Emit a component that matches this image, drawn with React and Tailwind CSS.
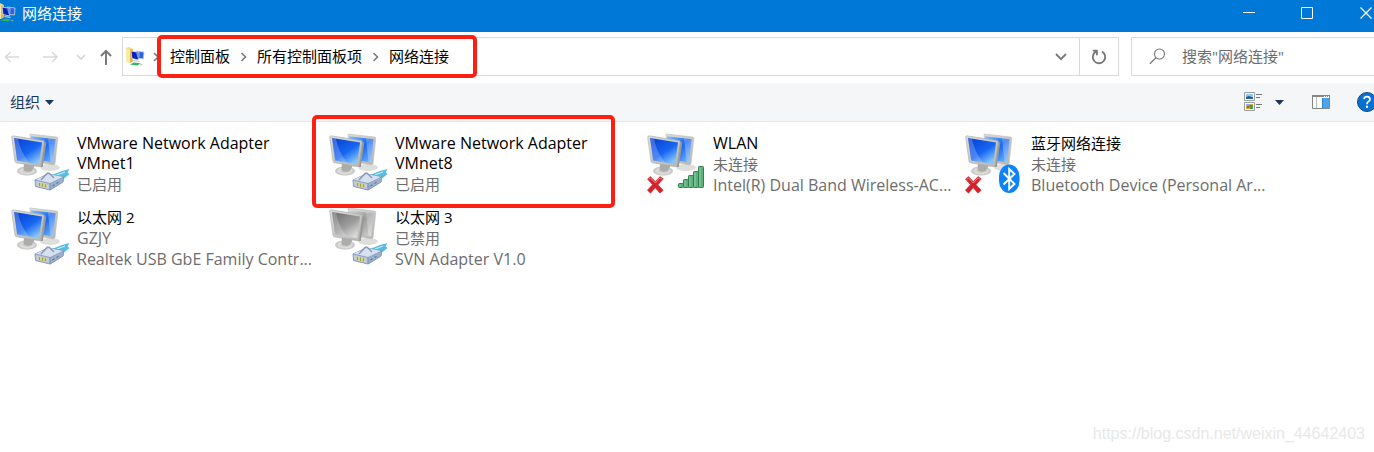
import React from "react";

function Monitors({ disabled }) {
  const k = disabled ? "g" : "b";
  const dark = disabled ? "#6c6c6c" : "#063cd0";
  const mid = disabled ? "#9c9c9c" : "#1766f2";
  const light = disabled ? "#dadada" : "#86c6fc";
  return (
    <g>
      <defs>
        <linearGradient id={"scr" + k} x1="0" y1="0" x2="0.7" y2="1">
          <stop offset="0" stopColor={dark} />
          <stop offset="0.6" stopColor={mid} />
          <stop offset="1" stopColor={light} />
        </linearGradient>
        <linearGradient id={"back" + k} x1="0" y1="0" x2="1" y2="1">
          <stop offset="0" stopColor={light} />
          <stop offset="0.5" stopColor={mid} />
          <stop offset="1" stopColor={light} />
        </linearGradient>
        <linearGradient id={"rim" + k} x1="0" y1="0" x2="1" y2="1">
          <stop offset="0" stopColor="#dcdcda" />
          <stop offset="1" stopColor="#b5b5b2" />
        </linearGradient>
        <radialGradient id={"foot" + k}>
          <stop offset="0" stopColor="#bdbdbd" />
          <stop offset="0.6" stopColor="#dededc" />
          <stop offset="1" stopColor="#c0c0be" />
        </radialGradient>
      </defs>
      <ellipse cx="40" cy="34.500" rx="10" ry="3.500" fill="#dededc" />
      <path d="M20 1 46.500 4Q48 4.200 47.800 5.500L45 30.500Q44.800 32 43 31.800L22 28Z" fill={`url(#rim${k})`} stroke="#bcbcb9" strokeWidth=".6" />
      <path d="M21 3.200 45.500 6.200 43 29.500 22.500 26Z" fill={`url(#back${k})`} />
      <path d="M38 5.300 45.500 6.200 43 29.500 40.500 28.900Z" fill="#fff" opacity=".25" />
      <ellipse cx="17" cy="38" rx="10" ry="4.500" fill={`url(#foot${k})`} />
      <path d="M14 30 25 32 22 38Q17 40 13.500 37Z" fill="#acacaa" />
      <path d="M34.500 8.500 36.300 10 32.800 34 30.500 34Z" fill="#979794" />
      <path d="M3 2.800 33 7.500Q34.500 7.800 34.300 9L31.200 32.500Q31 34 29.500 33.700L6.500 29.800Q5.300 29.600 5 28.300L1.700 4.500Q1.600 2.800 3 2.800Z" fill={`url(#rim${k})`} stroke="#a9a9a6" strokeWidth=".6" />
      <path d="M4 5 32 9.500 29.200 31.300 7.200 27.600Z" fill={`url(#scr${k})`} />
      <path d="M4 5 8 5.700Q10 18 19 29.600L7.200 27.600Z" fill="#fff" opacity=".22" />
    </g>
  );
}

function Cable() {
  return (
    <g strokeLinejoin="round">
      <path d="M42 42 52 38 59.500 36 57.500 39.500 59.500 41 53.500 46 45 46Z" fill="#55bde0" />
      <path d="M47 42 55 39" stroke="#c4ecf7" strokeWidth="1.200" />
      <path d="M25 47 38 41 53.500 44 53 49 40 57 25.500 53.500Z" fill="#bccae0" stroke="#7f93b5" strokeWidth=".9" />
      <path d="M25 47 38 41 53.500 44 40 50.500Z" fill="#d6e0ee" />
      <path d="M40 50.500 53.500 44 53 49 40 57Z" fill="#9db0d0" stroke="#7f93b5" strokeWidth=".6" />
      <path d="M25 47 40 50.500V57" fill="none" stroke="#7f93b5" strokeWidth=".8" />
      <path d="M31 47 37 40.500Q38 39.500 39.500 40.500L44 45" fill="none" stroke="#8496b4" strokeWidth="1.400" />
      <path d="M27 49 38 51.500V55.300L27 52.700Z" fill="#d5d29c" />
      <path d="M29.500 50V53M32.500 50.500V53.700M35.500 51.300V54.300" stroke="#a39c43" strokeWidth="1.100" />
      <path d="M42.500 53 44.500 51.800M46.500 50.500 48.500 49.300" stroke="#61759b" strokeWidth="1.200" />
    </g>
  );
}

function Cross() {
  return (
    <g>
      <path d="M1.500 46 4.500 43.600 9.300 48.600 14 43.600 17.300 45.800 12 51.800 17.200 57.300 14 60.200 9.200 54.800 4.500 60.200 1.400 57.200 6.500 51.700Z" fill="#d8202a" stroke="#c22b33" strokeWidth=".6" strokeLinejoin="round" />
      <path d="M3 46 4.600 45 9.300 50 14 45 16 46" fill="none" stroke="#f08080" strokeWidth="1" />
    </g>
  );
}

function Signal() {
  const bars = [[32, 4], [37, 8], [42, 12], [47, 16], [52, 21]];
  return (
    <g>
      {bars.map(([x, h]) => (
        <g key={x}>
          <rect x={x + 0.5} y={54.5 - h} width="5" height={h} rx=".8" fill="#5bb07c" stroke="#32804f" />
          <path d={`M${x + 2} ${55.5 - h}v${h - 2}`} stroke="#94cba7" />
        </g>
      ))}
    </g>
  );
}

function Bluetooth() {
  return (
    <g>
      <rect x="35" y="31.500" width="20.500" height="28.500" rx="10.200" ry="12" fill="#0a84f8" />
      <path d="M39.500 40 50.500 51 45.200 56V36L50.500 41 39.500 51.500" fill="none" stroke="#fff" strokeWidth="1.900" />
    </g>
  );
}

function AdapterIcon({ kind }) {
  return (
    <svg viewBox="0 0 62 62" className="h-[62px] w-[62px] shrink-0" aria-hidden="true">
      <Monitors disabled={kind === "disabled"} />
      {(kind === "wired" || kind === "disabled") && <Cable />}
      {(kind === "wifi" || kind === "bluetooth") && <Cross />}
      {kind === "wifi" && <Signal />}
      {kind === "bluetooth" && <Bluetooth />}
    </svg>
  );
}

function FolderIcon({ className }) {
  return (
    <svg viewBox="0 0 20 20" className={className} aria-hidden="true">
      <path d="M1 1 4 0 8 2V14L5 16 1 14Z" fill="#f4d979" />
      <path d="M1 1 5 3V16L1 14Z" fill="#fbeaa9" />
      <path d="M5 3 8 2V14L5 16Z" fill="#dfb64a" />
      <path d="M11 4 19 5 18.500 12 11 11Z" fill="#2f62dc" stroke="#cfd5df" strokeWidth=".8" />
      <path d="M6 4 14 5.500 13.500 13 7 11.500Z" fill="#0a1fb4" stroke="#dfe3ea" strokeWidth=".8" />
      <path d="M11 5.500 14 6 13.500 12 12.500 11Z" fill="#5a9af5" />
      <path d="M9 13 15 14 14 15 8 14Z" fill="#c5c9cf" />
      <path d="M5 17.500 9 15.500 16 16.500 12 18.500Z" fill="#2cb45c" />
      <path d="M15 17 18 17.500 16 18.500Z" fill="#a9aeb8" />
    </svg>
  );
}

function Caret() {
  return (
    <svg viewBox="0 0 9 5" className="h-[5px] w-[9px]" aria-hidden="true">
      <path d="M0 0H9L4.500 5Z" fill="#1b365f" />
    </svg>
  );
}

function Crumb() {
  return (
    <svg viewBox="0 0 27 12" className="h-3 w-[27px] shrink-0" aria-hidden="true">
      <path d="M11.500 2 15.500 6 11.500 10" fill="none" stroke="#7b7b7b" strokeWidth="1.600" />
    </svg>
  );
}

const adapters = [
  { name: "VMware Network Adapter VMnet1", status: "已启用", kind: "wired" },
  { name: "VMware Network Adapter VMnet8", status: "已启用", kind: "wired", marked: true },
  { name: "WLAN", status: "未连接", device: "Intel(R) Dual Band Wireless-AC...", kind: "wifi" },
  { name: "蓝牙网络连接", status: "未连接", device: "Bluetooth Device (Personal Ar...", kind: "bluetooth" },
  { name: "以太网 2", status: "GZJY", device: "Realtek USB GbE Family Contr...", kind: "wired" },
  { name: "以太网 3", status: "已禁用", device: "SVN Adapter V1.0", kind: "disabled" },
];

const isLatin = (text) => /^[\x20-\x7e]*$/.test(text);

function Line({ text, className }) {
  return <p className={`${isLatin(text) ? "text-[16px]" : "text-[15px]"} ${className}`}>{text}</p>;
}

function Adapter({ item }) {
  return (
    <li className="relative flex h-[74px] gap-[5px] pl-[10px]">
      <AdapterIcon kind={item.kind} />
      <div className="w-[236px] whitespace-nowrap text-[#6d6d6d]">
        <Line text={item.name} className="mb-[1px] w-[210px] whitespace-normal leading-[20px] text-black" />
        <Line text={item.status} className="leading-[21px]" />
        {item.device && <Line text={item.device} className="leading-[21px]" />}
      </div>
      {item.marked && (
        <span className="pointer-events-none absolute -left-[6px] -top-[18px] z-10 h-[93px] w-[303px] rounded-[5px] border-4 border-[#fc2013]" />
      )}
    </li>
  );
}

export default function App() {
  return (
    <div className="flex min-h-screen flex-col overflow-hidden bg-white font-['Open_Sans','Noto_Sans_CJK_SC',sans-serif] text-[15px] text-black">
      <header className="flex h-8 items-center bg-[#0078d7] text-white">
        <FolderIcon className="-ml-[4px] mb-[6px] h-5 w-5" />
        <h1 className="ml-[6px] pb-[6px] leading-6">网络连接</h1>
        <div className="-mr-[22px] ml-auto flex h-full pb-[6px]">
          <button aria-label="最小化" className="flex w-[58px] items-center justify-center">
            <svg viewBox="0 0 12 12" className="h-3 w-3"><path d="M0 5.500H12" stroke="#fff" /></svg>
          </button>
          <button aria-label="最大化" className="flex w-[58px] items-center justify-center">
            <svg viewBox="0 0 12 12" className="h-3 w-3"><path d="M.5 .5H11.500V11.500H.5Z" fill="none" stroke="#fff" /></svg>
          </button>
          <button aria-label="关闭" className="flex w-[60px] items-center justify-center">
            <svg viewBox="0 0 12 12" className="h-3 w-3"><path d="M.5 .5 11.500 11.500M11.500 .5 .5 11.500" stroke="#fff" strokeWidth="1.200" /></svg>
          </button>
        </div>
      </header>

      <div className="flex h-[51px] items-center pb-[2px]">
        <div className="flex w-[122px] shrink-0 items-center pl-1">
          <button aria-label="后退" className="w-[39px]">
            <svg viewBox="0 0 16 14" className="h-[14px] w-4"><path d="M15 7H1.500M6.500 2 1.500 7 6.500 12" fill="none" stroke="#dadada" strokeWidth="1.600" /></svg>
          </button>
          <button aria-label="前进" className="w-[33px]">
            <svg viewBox="0 0 16 14" className="h-[14px] w-4"><path d="M0 7H14M9 2 14 7 9 12" fill="none" stroke="#dadada" strokeWidth="1.600" /></svg>
          </button>
          <button aria-label="最近位置" className="w-[24px]">
            <svg viewBox="0 0 10 8" className="h-2 w-[10px]"><path d="M1 2 5 6 9 2" fill="none" stroke="#d2d2d2" strokeWidth="1.500" /></svg>
          </button>
          <button aria-label="上移">
            <svg viewBox="0 0 12 16" className="h-4 w-3"><path d="M6 16V1.500M1 7 6 1.800 11 7" fill="none" stroke="#757575" strokeWidth="1.900" /></svg>
          </button>
        </div>

        <div className="flex h-[39px] flex-1 items-center border border-[#d9d9d9]">
          <FolderIcon className="ml-[2px] h-5 w-5" />
          <svg viewBox="0 0 6 12" className="ml-[8px] h-3 w-[6px]" aria-hidden="true"><path d="M1 2 5 6 1 10" fill="none" stroke="#7b7b7b" strokeWidth="1.600" /></svg>
          <nav aria-label="地址" className="relative ml-[11px] flex h-[39px] items-center">
            <a href="#panel">控制面板</a>
            <Crumb />
            <a href="#all">所有控制面板项</a>
            <Crumb />
            <a href="#network">网络连接</a>
            <span className="pointer-events-none absolute -bottom-[2px] -left-[13px] -right-[28px] -top-[2px] rounded-[5px] border-4 border-[#fc2013]" />
          </nav>
          <button aria-label="以前的位置" className="ml-auto flex h-full w-[37px] items-center justify-center">
            <svg viewBox="0 0 12 8" className="h-2 w-3"><path d="M1 1 6 6.200 11 1" fill="none" stroke="#7a7a7a" strokeWidth="1.900" /></svg>
          </button>
          <button aria-label="刷新" className="flex h-full w-[39px] items-center justify-center border-l border-[#d9d9d9]">
            <svg viewBox="0 0 16 16" className="h-4 w-4"><path d="M11 2.600A6.200 6.200 0 1 1 5 2.600M1.800 1.700H5.900V6.200" fill="none" stroke="#777" strokeWidth="1.800" /></svg>
          </button>
        </div>

        <label className="ml-3 flex h-[39px] w-[243px] items-center gap-[16px] border border-r-0 border-[#d9d9d9] pl-[17px]">
          <svg viewBox="0 0 17 17" className="h-[17px] w-[17px] shrink-0" aria-hidden="true"><circle cx="10.500" cy="6" r="5" fill="none" stroke="#777" strokeWidth="1.100" /><path d="M7 9.800.8 15.800" stroke="#777" strokeWidth="1.200" /></svg>
          <input type="search" aria-label="搜索" placeholder={'搜索"网络连接"'} className="min-w-0 flex-1 outline-none placeholder:text-[#6d6d6d]" />
        </label>
      </div>

      <div className="flex h-[39px] items-center overflow-hidden border-b border-[#e6e7e9] bg-[#f5f6f7] pl-[10px]">
        <button className="flex items-center gap-[5px] text-[#1b365f]">组织 <Caret /></button>
        <div className="-mr-[3px] ml-auto flex items-center">
          <button aria-label="更改视图">
            <svg viewBox="0 0 18 20" className="h-5 w-[18px]">
              <path d="M.5 .5H10.500V8.500H.5ZM.5 10.500H10.500V18.500H.5Z" fill="#fff" stroke="#9b9b9b" />
              <path d="M2 2H9V7H2Z" fill="#8ec6f0" /><path d="M2 5 5 4 9 5.500V7H2Z" fill="#275d8c" />
              <path d="M2 12H9V17H2Z" fill="#c8b04a" /><path d="M2 12H5V14H2Z" fill="#76b9e8" /><path d="M5 13H9V17H6Z" fill="#55983d" /><path d="M3 14H5V16H3Z" fill="#c54c34" />
              <path d="M12 2.500H18M12 5.500H16M12 12.500H18M12 15.500H16" stroke="#777" />
            </svg>
          </button>
          <button aria-label="更多选项" className="ml-[13px] flex h-5 items-center"><Caret /></button>
          <button aria-label="显示预览窗格" className="ml-[28px]">
            <svg viewBox="0 0 18 14" className="h-[14px] w-[18px]">
              <path d="M.5 .5H17.500V13.500H.5Z" fill="#fff" stroke="#858585" />
              <path d="M0 1H18" stroke="#858585" strokeWidth="2" /><path d="M12 1.500H17" stroke="#fff" strokeWidth="1" strokeDasharray="1 1" />
              <path d="M4.500 2V13" stroke="#bbb" /><path d="M10 3H17V13H10Z" fill="#4ba3ec" /><path d="M10.500 3V13" stroke="#2f86cc" />
            </svg>
          </button>
          <button aria-label="帮助" className="ml-[27px]">
            <svg viewBox="0 0 20 20" className="h-5 w-5"><circle cx="10" cy="10" r="9.500" fill="#0870cf" stroke="#104c86" /><path d="M7 7.200Q7.300 4.700 10 4.700T13 7.200Q13 8.500 11.300 9.700 10 10.700 10 12.200" fill="none" stroke="#fff" strokeWidth="1.700" /><circle cx="10" cy="14.800" r="1.200" fill="#fff" /></svg>
          </button>
        </div>
      </div>

      <main className="pt-[11px]">
        <ul className="grid grid-cols-[repeat(auto-fill,318px)]">
          {adapters.map((item) => <Adapter key={item.name} item={item} />)}
        </ul>
      </main>

      <footer className="mt-auto pb-[8px] pr-[9px] text-right font-['Liberation_Sans',sans-serif] text-base leading-5 text-[#e8e8e8]">
        https://blog.csdn.net/weixin_44642403
      </footer>
    </div>
  );
}
